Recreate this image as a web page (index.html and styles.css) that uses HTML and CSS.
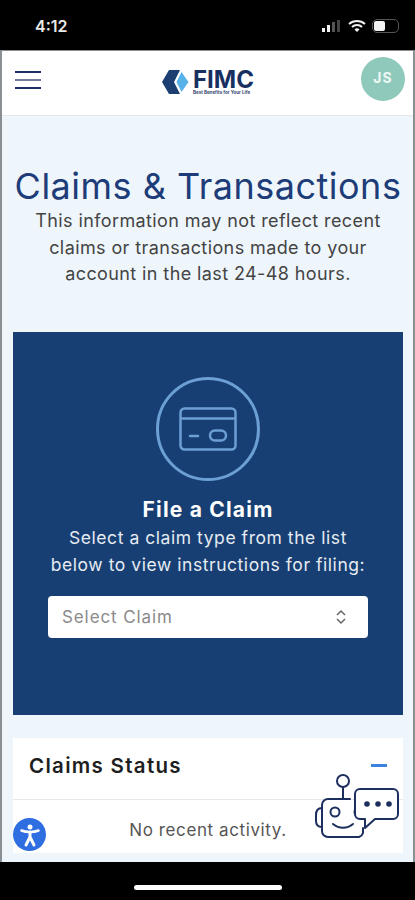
FILE: index.html
```html
<!DOCTYPE html>
<html>
	<head>
		<meta charset="utf-8">
		<title>Claims &amp; Transactions</title>
		<link rel="stylesheet" href="styles.css">
	</head>
	<body>
		<div class="phone">
			<div class="statusbar">
				<span class="time">4:12</span>
				<div class="status-icons">
					<svg width="20" height="14" viewBox="0 0 20 14">
						<rect x="0" y="9" width="3" height="4" fill="#f2f2f2"/>
						<rect x="5" y="6" width="3" height="7" fill="#f2f2f2"/>
						<rect x="10" y="3" width="3" height="10" fill="#555"/>
						<rect x="15" y="1" width="3" height="12" fill="#444"/>
					</svg>
					<svg class="wifi" width="18" height="14" viewBox="0 0 18 14">
						<path d="M1 5a12 12 0 0 1 16 0" fill="none" stroke="#f2f2f2" stroke-width="2"/>
						<path d="M4 8a7.500 7.500 0 0 1 10 0" fill="none" stroke="#f2f2f2" stroke-width="2"/>
						<path d="M6.500 10.500a3.500 3.500 0 0 1 5 0L9 13z" fill="#f2f2f2"/>
					</svg>
					<div class="battery"><div class="battery-fill"></div></div>
				</div>
			</div>

			<div class="screen">
				<header class="topbar">
					<div class="burger"><i></i><i class="mid"></i><i></i></div>
					<div class="logo">
						<svg width="27" height="24" viewBox="0 0 27 24">
							<path d="M7 0H18L12 12L18 24H7L0 12Z" fill="#1a3f70"/>
							<path d="M19.500 2L26.500 12L19.500 22L14.500 12Z" fill="#58b2ea"/>
						</svg>
						<div class="logo-text">
							<span class="logo-name">FIMC</span>
							<span class="logo-tag">Best Benefits for Your Life</span>
						</div>
					</div>
					<div class="avatar">JS</div>
				</header>

				<main class="content">
					<h1 class="page-title">Claims &amp; Transactions</h1>
					<p class="intro">This information may not reflect recent<br>claims or transactions made to your<br>account in the last 24-48 hours.</p>

					<section class="claim-card">
						<div class="claim-icon">
							<svg width="58" height="44" viewBox="0 0 58 44" fill="none" stroke="#6c9fd4" stroke-width="2.500">
								<rect x="1.500" y="1.500" width="55" height="41" rx="4"/>
								<path d="M1.500 11.500H56.500"/>
								<path d="M11 29H19" stroke-linecap="round"/>
								<rect x="31" y="23.500" width="16" height="10" rx="5"/>
							</svg>
						</div>
						<h2 class="claim-title">File a Claim</h2>
						<p class="claim-text">Select a claim type from the list<br>below to view instructions for filing:</p>
						<div class="select">
							<span>Select Claim</span>
							<svg width="12" height="16" viewBox="0 0 12 16" fill="none" stroke="#666" stroke-width="1.500">
								<path d="M2 6L6 2L10 6"/>
								<path d="M2 10L6 14L10 10"/>
							</svg>
						</div>
					</section>

					<section class="status-card">
						<div class="status-head">
							<span>Claims Status</span>
							<i class="collapse"></i>
						</div>
						<div class="status-body">No recent activity.</div>
					</section>
				</main>

				<!-- floating widgets -->
				<div class="a11y">
					<svg width="26" height="26" viewBox="0 0 26 26" fill="none" stroke="#fff" stroke-linecap="round" stroke-linejoin="round">
						<circle cx="13" cy="5" r="2.500" fill="#fff" stroke="none"/>
						<path d="M4.500 8.500C9 10.500 17 10.500 21.500 8.500" stroke-width="2.500"/>
						<path d="M13 10V15M13 15L9 23M13 15L17 23" stroke-width="3"/>
					</svg>
				</div>
				<svg class="bot" width="84" height="70" viewBox="0 0 84 70" fill="none" stroke="#1c2f5e" stroke-width="2" stroke-linecap="round" stroke-linejoin="round">
					<circle cx="28" cy="9" r="6"/>
					<path d="M28 15V27"/>
					<path d="M35 27H13a6 6 0 0 0-6 6V59a6 6 0 0 0 6 6H44a6 6 0 0 0 4-4V56"/>
					<path d="M7 36C3 36 1 39 1 43V49C1 53 3 55 7 55"/>
					<circle cx="20" cy="40" r="4.500"/>
					<path d="M44 35.500a4.500 4.500 0 0 0 0 9"/>
					<path d="M18 52C24 57 32 57 38 52"/>
					<path d="M45 17a5 5 0 0 0-5 5V42a5 5 0 0 0 5 5H50V56L60 47H78a5 5 0 0 0 5-5V22a5 5 0 0 0-5-5Z" fill="#fff"/>
					<circle cx="52" cy="32" r="1.800" fill="#1c2f5e"/>
					<circle cx="63" cy="32" r="1.800" fill="#1c2f5e"/>
					<circle cx="74" cy="32" r="1.800" fill="#1c2f5e"/>
				</svg>
			</div>

			<div class="homebar"><div class="home-pill"></div></div>
		</div>
	</body>
</html>
```
FILE: styles.css
```css
* {
    box-sizing: border-box;
}
html, body {
    margin: 0;
    padding: 0;
    background: #000;
}
.phone {
    width: 415px;
    height: 900px;
    display: flex;
    flex-direction: column;
    overflow: hidden;
    font-family: Inter, "Open Sans", "Liberation Sans", sans-serif;
}

/* status bar */
.statusbar {
    height: 50px;
    flex: none;
    background: #000;
    display: flex;
    align-items: center;
    justify-content: space-between;
    padding: 2px 16px 0 35px;
}
.time {
    color: #e8e8e8;
    font-size: 16px;
    font-weight: 600;
}
.status-icons {
    display: flex;
    align-items: center;
    gap: 6px;
}
.battery {
    width: 27px;
    height: 14px;
    border: 1px solid #555;
    border-radius: 5px;
    padding: 1px;
}
.battery-fill {
    width: 11px;
    height: 100%;
    background: #f2f2f2;
    border-radius: 2px;
}

/* app */
.screen {
    flex: 1;
    position: relative;
    background: #eef6fc;
    border-left: 2px solid #8a8f94;
    border-right: 2px solid #8a8f94;
    border-top: 1px solid #8a8f94;
    display: flex;
    flex-direction: column;
    overflow: hidden;
}
.topbar {
    height: 65px;
    flex: none;
    background: #fff;
    display: flex;
    align-items: center;
    justify-content: space-between;
    padding: 0 8px 8px 13px;
    border-bottom: 1px solid #e4e8ec;
}
.burger {
    width: 26px;
    display: flex;
    flex-direction: column;
    gap: 5.500px;
    margin-top: 2px;
}
.burger i {
    display: block;
    height: 2.500px;
    background: #1c2f66;
}
.burger .mid {
    background: #6f7a9c;
}
.logo {
    display: flex;
    align-items: center;
    gap: 4px;
    margin-left: 14px;
    margin-top: 6px;
}
.logo-text {
    display: flex;
    flex-direction: column;
}
.logo-name {
    color: #17305f;
    font-size: 24px;
    line-height: 21px;
    font-weight: 700;
}
.logo-tag {
    color: #33466f;
    font-size: 4.500px;
    line-height: 6px;
    font-weight: 700;
}
.avatar {
    width: 44px;
    height: 44px;
    border-radius: 50%;
    background: #8fc9bb;
    color: #eef7f4;
    font-size: 14px;
    font-weight: 700;
    letter-spacing: 1px;
    display: flex;
    align-items: center;
    justify-content: center;
    padding-bottom: 3px;
}

.content {
    flex: 1;
    padding: 49px 10px 0 11px;
    display: flex;
    flex-direction: column;
}
.page-title {
    margin: 0;
    color: #1d3c78;
    font-size: 36px;
    line-height: 43px;
    font-weight: 400;
    letter-spacing: 0.500px;
    text-align: center;
    white-space: nowrap;
}
.intro {
    margin: 0;
    color: #444;
    font-size: 18px;
    line-height: 26.500px;
    letter-spacing: 0.400px;
    text-align: center;
    white-space: nowrap;
}

.claim-card {
    margin-top: 44px;
    height: 383px;
    flex: none;
    background: #173f73;
    display: flex;
    flex-direction: column;
    align-items: center;
    padding: 45px 35px 0;
}
.claim-icon {
    width: 104px;
    height: 104px;
    flex: none;
    border: 3px solid #6c9fd4;
    border-radius: 50%;
    display: flex;
    align-items: center;
    justify-content: center;
}
.claim-title {
    margin: 15px 0 0;
    color: #fff;
    font-size: 21px;
    line-height: 28px;
    font-weight: 700;
    letter-spacing: 1.200px;
}
.claim-text {
    margin: 0;
    color: #e6ebf2;
    font-size: 17.500px;
    line-height: 27px;
    letter-spacing: 0.550px;
    text-align: center;
    white-space: nowrap;
}
.select {
    margin-top: 18px;
    width: 320px;
    height: 42px;
    flex: none;
    background: #fff;
    border-radius: 4px;
    display: flex;
    align-items: center;
    justify-content: space-between;
    padding: 0 21px 0 14px;
    color: #8a8a8a;
    font-size: 17px;
    letter-spacing: 0.900px;
}

.status-card {
    margin-top: 23px;
    height: 115px;
    flex: none;
    background: #fff;
}
.status-head {
    height: 62px;
    display: flex;
    align-items: center;
    justify-content: space-between;
    padding: 0 16px 5px;
    border-bottom: 1px solid #e8e8e8;
    color: #1e1e1e;
    font-size: 20.500px;
    font-weight: 600;
    letter-spacing: 1.300px;
}
.collapse {
    width: 16px;
    height: 3px;
    background: #3b82e0;
}
.status-body {
    text-align: center;
    color: #555;
    font-size: 17px;
    line-height: 60px;
    letter-spacing: 0.600px;
}

/* floating */
.a11y {
    position: absolute;
    left: 11px;
    top: 767px;
    width: 33px;
    height: 33px;
    border-radius: 50%;
    background: #2e6ee0;
    display: flex;
    align-items: center;
    justify-content: center;
}
.bot {
    position: absolute;
    left: 313px;
    top: 721px;
}

.homebar {
    height: 38px;
    flex: none;
    background: #000;
    display: flex;
    justify-content: center;
    padding-top: 23px;
}
.home-pill {
    width: 148px;
    height: 5px;
    border-radius: 3px;
    background: #fff;
}
```
